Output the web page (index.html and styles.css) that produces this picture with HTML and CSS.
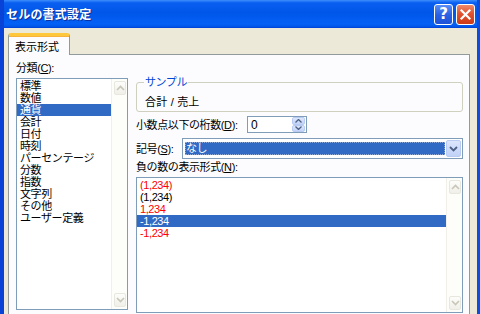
FILE: index.html
```html
<!DOCTYPE html>
<html lang="ja">
<head>
    <meta charset="UTF-8">
    <title>セルの書式設定</title>
    <link rel="stylesheet" href="styles.css">
</head>
<body>
    <div class="window">
        <div class="titlebar">
            <span class="title">セルの書式設定</span>
            <div class="caption-buttons">
                <span class="cap-btn help">?</span>
                <span class="cap-btn close">
                    <svg width="11" height="11" viewBox="0 0 11 11"><path d="M1.5 1.5 L9.5 9.5 M9.5 1.5 L1.5 9.5" stroke="#fff" stroke-width="2.2" stroke-linecap="square"/></svg>
                </span>
            </div>
        </div>

        <div class="client">
            <div class="tabs">
                <div class="tab active">表示形式</div>
            </div>

            <div class="panel">
                <div class="col-left">
                    <div class="label">分類(<u>C</u>):</div>
                    <div class="listbox category">
                        <ul class="items">
                            <li>標準</li>
                            <li>数値</li>
                            <li class="selected">通貨</li>
                            <li>会計</li>
                            <li>日付</li>
                            <li>時刻</li>
                            <li>パーセンテージ</li>
                            <li>分数</li>
                            <li>指数</li>
                            <li>文字列</li>
                            <li>その他</li>
                            <li>ユーザー定義</li>
                        </ul>
                        <div class="scrollbar">
                            <span class="sb-btn"><svg width="9" height="6" viewBox="0 0 9 6"><path d="M1 5 L4.5 1.5 L8 5" fill="none" stroke="#c8c6b8" stroke-width="1.6"/></svg></span>
                            <span class="sb-btn"><svg width="9" height="6" viewBox="0 0 9 6"><path d="M1 1 L4.5 4.5 L8 1" fill="none" stroke="#c8c6b8" stroke-width="1.6"/></svg></span>
                        </div>
                    </div>
                </div>

                <div class="col-right">
                    <fieldset class="sample">
                        <legend>サンプル</legend>
                        <div class="sample-value">合計 / 売上</div>
                    </fieldset>

                    <div class="row decimals">
                        <span class="label wide">小数点以下の桁数(<u>D</u>):</span>
                        <div class="spin">
                            <span class="spin-value">0</span>
                            <div class="spin-btns">
                                <span class="spin-btn"><svg width="7" height="4" viewBox="0 0 7 4"><path d="M0.5 3.5 L3.5 0.5 L6.5 3.5" fill="none" stroke="#4d6185" stroke-width="1.3"/></svg></span>
                                <span class="spin-btn"><svg width="7" height="4" viewBox="0 0 7 4"><path d="M0.5 0.5 L3.5 3.5 L6.5 0.5" fill="none" stroke="#4d6185" stroke-width="1.3"/></svg></span>
                            </div>
                        </div>
                    </div>

                    <div class="row symbol">
                        <span class="label short">記号(<u>S</u>):</span>
                        <div class="combo">
                            <span class="combo-value">なし</span>
                            <span class="combo-btn"><svg width="9" height="6" viewBox="0 0 9 6"><path d="M1 1 L4.5 4.5 L8 1" fill="none" stroke="#4d6185" stroke-width="1.8"/></svg></span>
                        </div>
                    </div>

                    <div class="label negative-label">負の数の表示形式(<u>N</u>):</div>
                    <div class="listbox negative">
                        <ul class="items">
                            <li class="red">(1,234)</li>
                            <li>(1,234)</li>
                            <li class="red">1,234</li>
                            <li class="selected">-1,234</li>
                            <li class="red">-1,234</li>
                        </ul>
                        <div class="scrollbar">
                            <span class="sb-btn"><svg width="9" height="6" viewBox="0 0 9 6"><path d="M1 5 L4.5 1.5 L8 5" fill="none" stroke="#c8c6b8" stroke-width="1.6"/></svg></span>
                            <span class="sb-btn"><svg width="9" height="6" viewBox="0 0 9 6"><path d="M1 1 L4.5 4.5 L8 1" fill="none" stroke="#c8c6b8" stroke-width="1.6"/></svg></span>
                        </div>
                    </div>
                </div>
            </div>
        </div>
    </div>
</body>
</html>
```

FILE: styles.css
```css
/* Reset */
* {
    margin: 0;
    padding: 0;
    box-sizing: border-box;
}

body {
    width: 480px;
    height: 314px;
    overflow: hidden;
    background: #ece9d8;
    font-family: "Liberation Sans", "Noto Sans CJK JP", sans-serif;
    font-size: 11px;
    color: #000;
}

u {
    text-decoration: underline;
}

/* Window frame */
.window {
    width: 480px;
    height: 314px;
    display: flex;
    flex-direction: column;
    border-left: 4px solid #0842d6;
    border-right: 3px solid #0a4de0;
    overflow: hidden;
}

.titlebar {
    height: 28px;
    flex-shrink: 0;
    margin: 0 -3px 0 -4px;
    padding: 0 5px 0 6px;
    display: flex;
    align-items: center;
    justify-content: space-between;
    background: linear-gradient(180deg, #3d8ffb 0%, #0a5ff0 10%, #0056e8 45%, #0461f5 85%, #0257ea 94%, #003dd7 100%);
}

.title {
    color: #fff;
    font-family: "Noto Sans CJK JP", sans-serif;
    font-weight: bold;
    font-size: 12px;
    line-height: 14px;
    letter-spacing: 0.2px;
    text-shadow: 1px 1px 0 #0a2fa0;
}

.caption-buttons {
    display: flex;
    gap: 3px;
    margin-top: 1px;
}

.cap-btn {
    width: 19px;
    height: 21px;
    border: 1px solid #fff;
    border-radius: 3px;
    display: flex;
    align-items: center;
    justify-content: center;
}

.cap-btn.help {
    background: linear-gradient(180deg, #5a8ff6 0%, #2a62e4 50%, #1d52d6 100%);
    color: #fff;
    font-family: "DejaVu Sans", sans-serif;
    font-weight: bold;
    font-size: 15px;
    line-height: 1;
}

.cap-btn.close {
    background: linear-gradient(180deg, #f08a6a 0%, #e0532f 45%, #cc3a18 100%);
}

/* Client area */
.client {
    flex: 1;
    padding: 5px 7px 0 4px;
    background: #ece9d8;
    overflow: hidden;
}

.tabs {
    display: flex;
    position: relative;
    z-index: 1;
}

.tab {
    width: 62px;
    height: 22px;
    margin-bottom: -1px;
    padding: 4px 0 0 6px;
    background: #fcfcfe;
    border: 1px solid #919b9c;
    border-bottom: none;
    border-top: 3px solid #ffc83c;
    border-radius: 3px 3px 0 0;
    box-shadow: inset 0 1px 0 #f8b33a;
    font-family: "Noto Sans CJK JP", sans-serif;
    line-height: 12px;
}

.panel {
    height: 300px;
    display: grid;
    grid-template-columns: 112px 1fr;
    column-gap: 8px;
    align-items: start;
    padding: 7px 6px 0 7px;
    background: #fcfcfe;
    border: 1px solid #919b9c;
    letter-spacing: -0.4px;
}

.label {
    line-height: 12px;
    white-space: nowrap;
}

.col-left .label {
    margin-bottom: 4px;
}

/* List boxes */
.listbox {
    display: flex;
    background: #fff;
    border: 1px solid #7f9db9;
}

.listbox.category {
    height: 232px;
}

.listbox.negative {
    height: 136px;
}

.items {
    flex: 1;
    list-style: none;
    padding-top: 1px;
}

.items li {
    height: 12px;
    line-height: 12px;
    padding-left: 3px;
    white-space: nowrap;
}

.items li.selected {
    background: #316ac5;
    color: #fff;
}

.items li.red {
    color: #ff0000;
}

.scrollbar {
    width: 16px;
    display: flex;
    flex-direction: column;
    justify-content: space-between;
    padding: 2px 1px 2px 2px;
    background: #fdfdfa;
    border-left: 1px solid #f0efe8;
}

.sb-btn {
    height: 14px;
    display: flex;
    align-items: center;
    justify-content: center;
    border: 1px solid #e8e7de;
    border-radius: 2px;
    background: linear-gradient(180deg, #fdfdfb 0%, #f0efe8 100%);
}

/* Right column */
.col-right {
    display: flex;
    flex-direction: column;
    padding-top: 14px;
}

.sample {
    border: 1px solid #d0d0bf;
    border-radius: 3px;
    padding: 8px 8px 3px 8px;
}

.sample legend {
    margin-left: -1px;
    padding: 0 1px;
    color: #0046d5;
    line-height: 12px;
}

.sample-value {
    line-height: 12px;
    letter-spacing: 0.2px;
}

.row {
    display: flex;
    align-items: center;
}

.decimals {
    margin-top: 4px;
    height: 17px;
}

.label.wide {
    width: 111px;
}

.label.short {
    width: 46px;
}

.spin {
    width: 60px;
    height: 17px;
    display: flex;
    align-items: center;
    justify-content: space-between;
    padding: 1px 1px 1px 3px;
    background: #fff;
    border: 1px solid #7f9db9;
}

.spin-value {
    line-height: 12px;
    font-size: 12px;
}

.spin-btns {
    width: 13px;
    height: 15px;
    display: flex;
    flex-direction: column;
}

.spin-btn {
    flex: 1;
    display: flex;
    align-items: center;
    justify-content: center;
    background: linear-gradient(180deg, #dde6fb 0%, #c3d3f8 100%);
    border: 1px solid #b8cbf3;
    border-radius: 2px;
}

.symbol {
    margin-top: 5px;
    height: 21px;
}

.combo {
    flex: 1;
    height: 21px;
    display: flex;
    align-items: stretch;
    padding: 1px 1px 1px 2px;
    background: #fff;
    border: 1px solid #7f9db9;
}

.combo-value {
    flex: 1;
    margin: 2px 1px 2px 0;
    padding-left: 1px;
    background: #316ac5;
    color: #fff;
    line-height: 13px;
    outline: 1px dotted #8fa9d9;
    outline-offset: -1px;
}

.combo-btn {
    width: 15px;
    display: flex;
    align-items: center;
    justify-content: center;
    background: linear-gradient(180deg, #dce6fc 0%, #c1d2f8 100%);
    border: 1px solid #b9cbf3;
    border-radius: 2px;
}

.negative-label {
    margin-top: 2px;
    margin-bottom: 4px;
}
```
